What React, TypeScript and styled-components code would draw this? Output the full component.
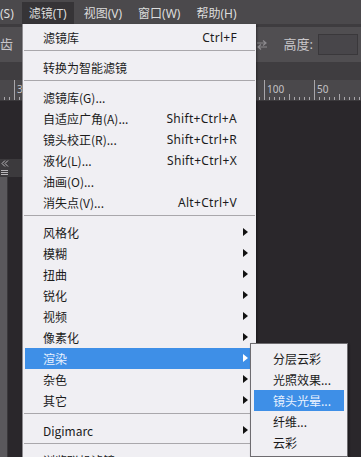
import React from "react";
import styled, { createGlobalStyle } from "styled-components";

const GlobalStyle = createGlobalStyle`
  html, body {
    margin: 0;
    padding: 0;
    background: #2a272b;
    overflow: hidden;
  }
  body {
    font-family: "Noto Sans", "Noto Sans CJK SC", sans-serif;
  }
`;

type Item =
  | { kind: "sep" }
  | { kind: "item"; label: string; shortcut?: string; sub?: boolean; active?: boolean };

const filterItems: Item[] = [
  { kind: "item", label: "滤镜库", shortcut: "Ctrl+F" },
  { kind: "sep" },
  { kind: "item", label: "转换为智能滤镜" },
  { kind: "sep" },
  { kind: "item", label: "滤镜库(G)..." },
  { kind: "item", label: "自适应广角(A)...", shortcut: "Shift+Ctrl+A" },
  { kind: "item", label: "镜头校正(R)...", shortcut: "Shift+Ctrl+R" },
  { kind: "item", label: "液化(L)...", shortcut: "Shift+Ctrl+X" },
  { kind: "item", label: "油画(O)..." },
  { kind: "item", label: "消失点(V)...", shortcut: "Alt+Ctrl+V" },
  { kind: "sep" },
  { kind: "item", label: "风格化", sub: true },
  { kind: "item", label: "模糊", sub: true },
  { kind: "item", label: "扭曲", sub: true },
  { kind: "item", label: "锐化", sub: true },
  { kind: "item", label: "视频", sub: true },
  { kind: "item", label: "像素化", sub: true },
  { kind: "item", label: "渲染", sub: true, active: true },
  { kind: "item", label: "杂色", sub: true },
  { kind: "item", label: "其它", sub: true },
  { kind: "sep" },
  { kind: "item", label: "Digimarc", sub: true },
  { kind: "sep" },
  { kind: "item", label: "浏览联机滤镜..." },
];

const renderItems = [
  { label: "分层云彩" },
  { label: "光照效果..." },
  { label: "镜头光晕...", active: true },
  { label: "纤维..." },
  { label: "云彩" },
];

// ruler ticks every 5px, long tick every 50px starting at x=264
const ticks = Array.from({ length: 72 }).map((_, i) => 4 + i * 5);

export default function App() {
  return (
    <Screen>
      <GlobalStyle />
      <MenuBar>
        <MenuTitle>(S)</MenuTitle>
        <MenuTitle $open>滤镜(T)</MenuTitle>
        <MenuTitle>视图(V)</MenuTitle>
        <MenuTitle>窗口(W)</MenuTitle>
        <MenuTitle>帮助(H)</MenuTitle>
      </MenuBar>

      <OptionsBar>
        <OptionText>齿</OptionText>
        <Spacer />
        <SwapIcon viewBox="0 0 12 10">
          <path d="M1 3h9M7 0.5l3 2.5-3 2.5M11 7H2M5 4.5L2 7l3 2.5" stroke="#8c8a8e" strokeWidth="1.2" fill="none" />
        </SwapIcon>
        <OptionText>高度:</OptionText>
        <OptionInput />
      </OptionsBar>

      <TabStrip />

      <Ruler>
        <RulerSvg viewBox="0 0 361 20" preserveAspectRatio="none">
          {ticks.map((x) => {
            const d = (((x - 264) % 50) + 50) % 50;
            const h = d === 0 ? 20 : d === 25 ? 6 : 3;
            return <line key={x} x1={x + 0.5} x2={x + 0.5} y1={20 - h} y2={20} stroke="#a8a6aa" strokeWidth="1" />;
          })}
        </RulerSvg>
        <RulerLabel style={{ left: 267 }}>100</RulerLabel>
        <RulerLabel style={{ left: 317 }}>50</RulerLabel>
        <RulerLabel style={{ left: 17 }}>3</RulerLabel>
      </Ruler>

      <Workspace>
        <SidePanel>
          <PanelHeader>
            <svg width="8" height="7" viewBox="0 0 8 7">
              <path d="M4 0.5L1 3.5l3 3M7 0.5L4 3.5l3 3" stroke="#b8b6ba" strokeWidth="1" fill="none" />
            </svg>
            <svg width="8" height="7" viewBox="0 0 8 7">
              <path d="M0 1.5h7M0 3.5h7M0 5.5h7" stroke="#b8b6ba" strokeWidth="1" />
            </svg>
          </PanelHeader>
          <PanelBody>
            <PanelStrip />
          </PanelBody>
        </SidePanel>
      </Workspace>

      <Dropdown>
        {filterItems.map((it, i) =>
          it.kind === "sep" ? (
            <Separator key={i} />
          ) : (
            <Row key={i} $active={it.active}>
              <Label>{it.label}</Label>
              {it.shortcut && <Shortcut>{it.shortcut}</Shortcut>}
              {it.sub && <Arrow $active={it.active} />}
            </Row>
          )
        )}
      </Dropdown>

      <SubMenu>
        {renderItems.map((it) => (
          <SubRow key={it.label} $active={it.active}>
            {it.label}
          </SubRow>
        ))}
      </SubMenu>
    </Screen>
  );
}

const Screen = styled.div`
  position: relative;
  width: 361px;
  height: 457px;
  overflow: hidden;
  display: flex;
  flex-direction: column;
  background: #2a272b;
`;

const MenuBar = styled.div`
  height: 24px;
  background: #4b494c;
  display: flex;
  align-items: stretch;
  padding-top: 2px;
  box-sizing: border-box;
`;

const MenuTitle = styled.div<{ $open?: boolean }>`
  display: flex;
  align-items: center;
  padding: 0 ${(p) => (p.$open ? "7px" : "8px")};
  margin-right: ${(p) => (p.$open ? "2px" : "0")};
  font-size: 12px;
  color: #dcdcdc;
  background: ${(p) => (p.$open ? "#363437" : "transparent")};
  &:first-child {
    padding-left: 0;
    padding-right: 8px;
  }
`;

const OptionsBar = styled.div`
  height: 38px;
  background: #504e51;
  border-top: 3px solid #3e3c3f;
  box-sizing: border-box;
  display: flex;
  align-items: center;
  padding-right: 3px;
`;

const OptionText = styled.span`
  font-size: 13px;
  color: #c9c7cb;
  margin-top: -2px;
`;

const Spacer = styled.div`
  flex: 1;
`;

const SwapIcon = styled.svg`
  width: 12px;
  height: 10px;
  margin-right: 16px;
`;

const OptionInput = styled.div`
  width: 38px;
  height: 19px;
  margin-left: 5px;
  background: #48464a;
  border: 1px solid #3a383b;
`;

const TabStrip = styled.div`
  height: 18px;
  background: #3f3d40;
`;

const Ruler = styled.div`
  position: relative;
  height: 20px;
  background: #4a484b;
  border-bottom: 1px solid #3a383b;
`;

const RulerSvg = styled.svg`
  position: absolute;
  inset: 0;
  width: 361px;
  height: 20px;
`;

const RulerLabel = styled.span`
  position: absolute;
  top: 2px;
  font-size: 10px;
  color: #c4c2c6;
`;

const Workspace = styled.div`
  flex: 1;
  display: flex;
  padding-top: 58px;
`;

const SidePanel = styled.div`
  width: 22px;
  display: flex;
  flex-direction: column;
`;

const PanelHeader = styled.div`
  height: 18px;
  background: #3c3a3d;
  display: flex;
  flex-direction: column;
  justify-content: space-around;
  padding-left: 1px;
  box-sizing: border-box;
`;

const PanelBody = styled.div`
  flex: 1;
  display: flex;
`;

const PanelStrip = styled.div`
  width: 7px;
  background: #5a585c;
  border-right: 1px solid #3a383b;
`;

const Dropdown = styled.div`
  position: absolute;
  left: 22px;
  top: 24px;
  width: 229px;
  padding: 3px 2px 0 2px;
  background: #f0eff3;
  border-left: 1px solid #8e8c90;
  box-shadow: 1px 1px 2px rgba(0, 0, 0, 0.4);
  font-size: 12px;
  color: #1b1b1b;
  display: flex;
  flex-direction: column;
`;

const Row = styled.div<{ $active?: boolean }>`
  position: relative;
  flex: none;
  height: 21px;
  display: flex;
  align-items: center;
  padding-left: 18px;
  padding-right: 17px;
  background: ${(p) => (p.$active ? "#3e8fe7" : "transparent")};
  color: ${(p) => (p.$active ? "#e9f2ff" : "#1b1b1b")};
  font-family: "Noto Sans CJK SC", "Noto Sans", sans-serif;
  line-height: 21px;
`;

const Label = styled.span`
  flex: 1;
  white-space: nowrap;
`;

const Shortcut = styled.span`
  font-family: "Noto Sans", "DejaVu Sans", sans-serif;
  font-size: 12px;
  letter-spacing: 0.3px;
`;

const Arrow = styled.span<{ $active?: boolean }>`
  position: absolute;
  right: 6px;
  top: 6px;
  width: 0;
  height: 0;
  border-top: 4px solid transparent;
  border-bottom: 4px solid transparent;
  border-left: 5px solid ${(p) => (p.$active ? "#ffffff" : "#111111")};
`;

const Separator = styled.div`
  flex: none;
  height: 1px;
  margin: 2px -1px 6px;
  background: #a9a7ab;
`;

const SubMenu = styled.div`
  position: absolute;
  left: 250px;
  top: 343px;
  width: 90px;
  padding: 4px 3px 3px 3px;
  background: #f0eff3;
  border: 1px solid #6e6c70;
  box-shadow: 1px 1px 2px rgba(0, 0, 0, 0.4);
`;

const SubRow = styled.div<{ $active?: boolean }>`
  height: 21px;
  display: flex;
  align-items: center;
  padding-left: 19px;
  font-size: 12px;
  font-family: "Noto Sans CJK SC", "Noto Sans", sans-serif;
  white-space: nowrap;
  background: ${(p) => (p.$active ? "#3e8fe7" : "transparent")};
  color: ${(p) => (p.$active ? "#e9f2ff" : "#1b1b1b")};
`;
